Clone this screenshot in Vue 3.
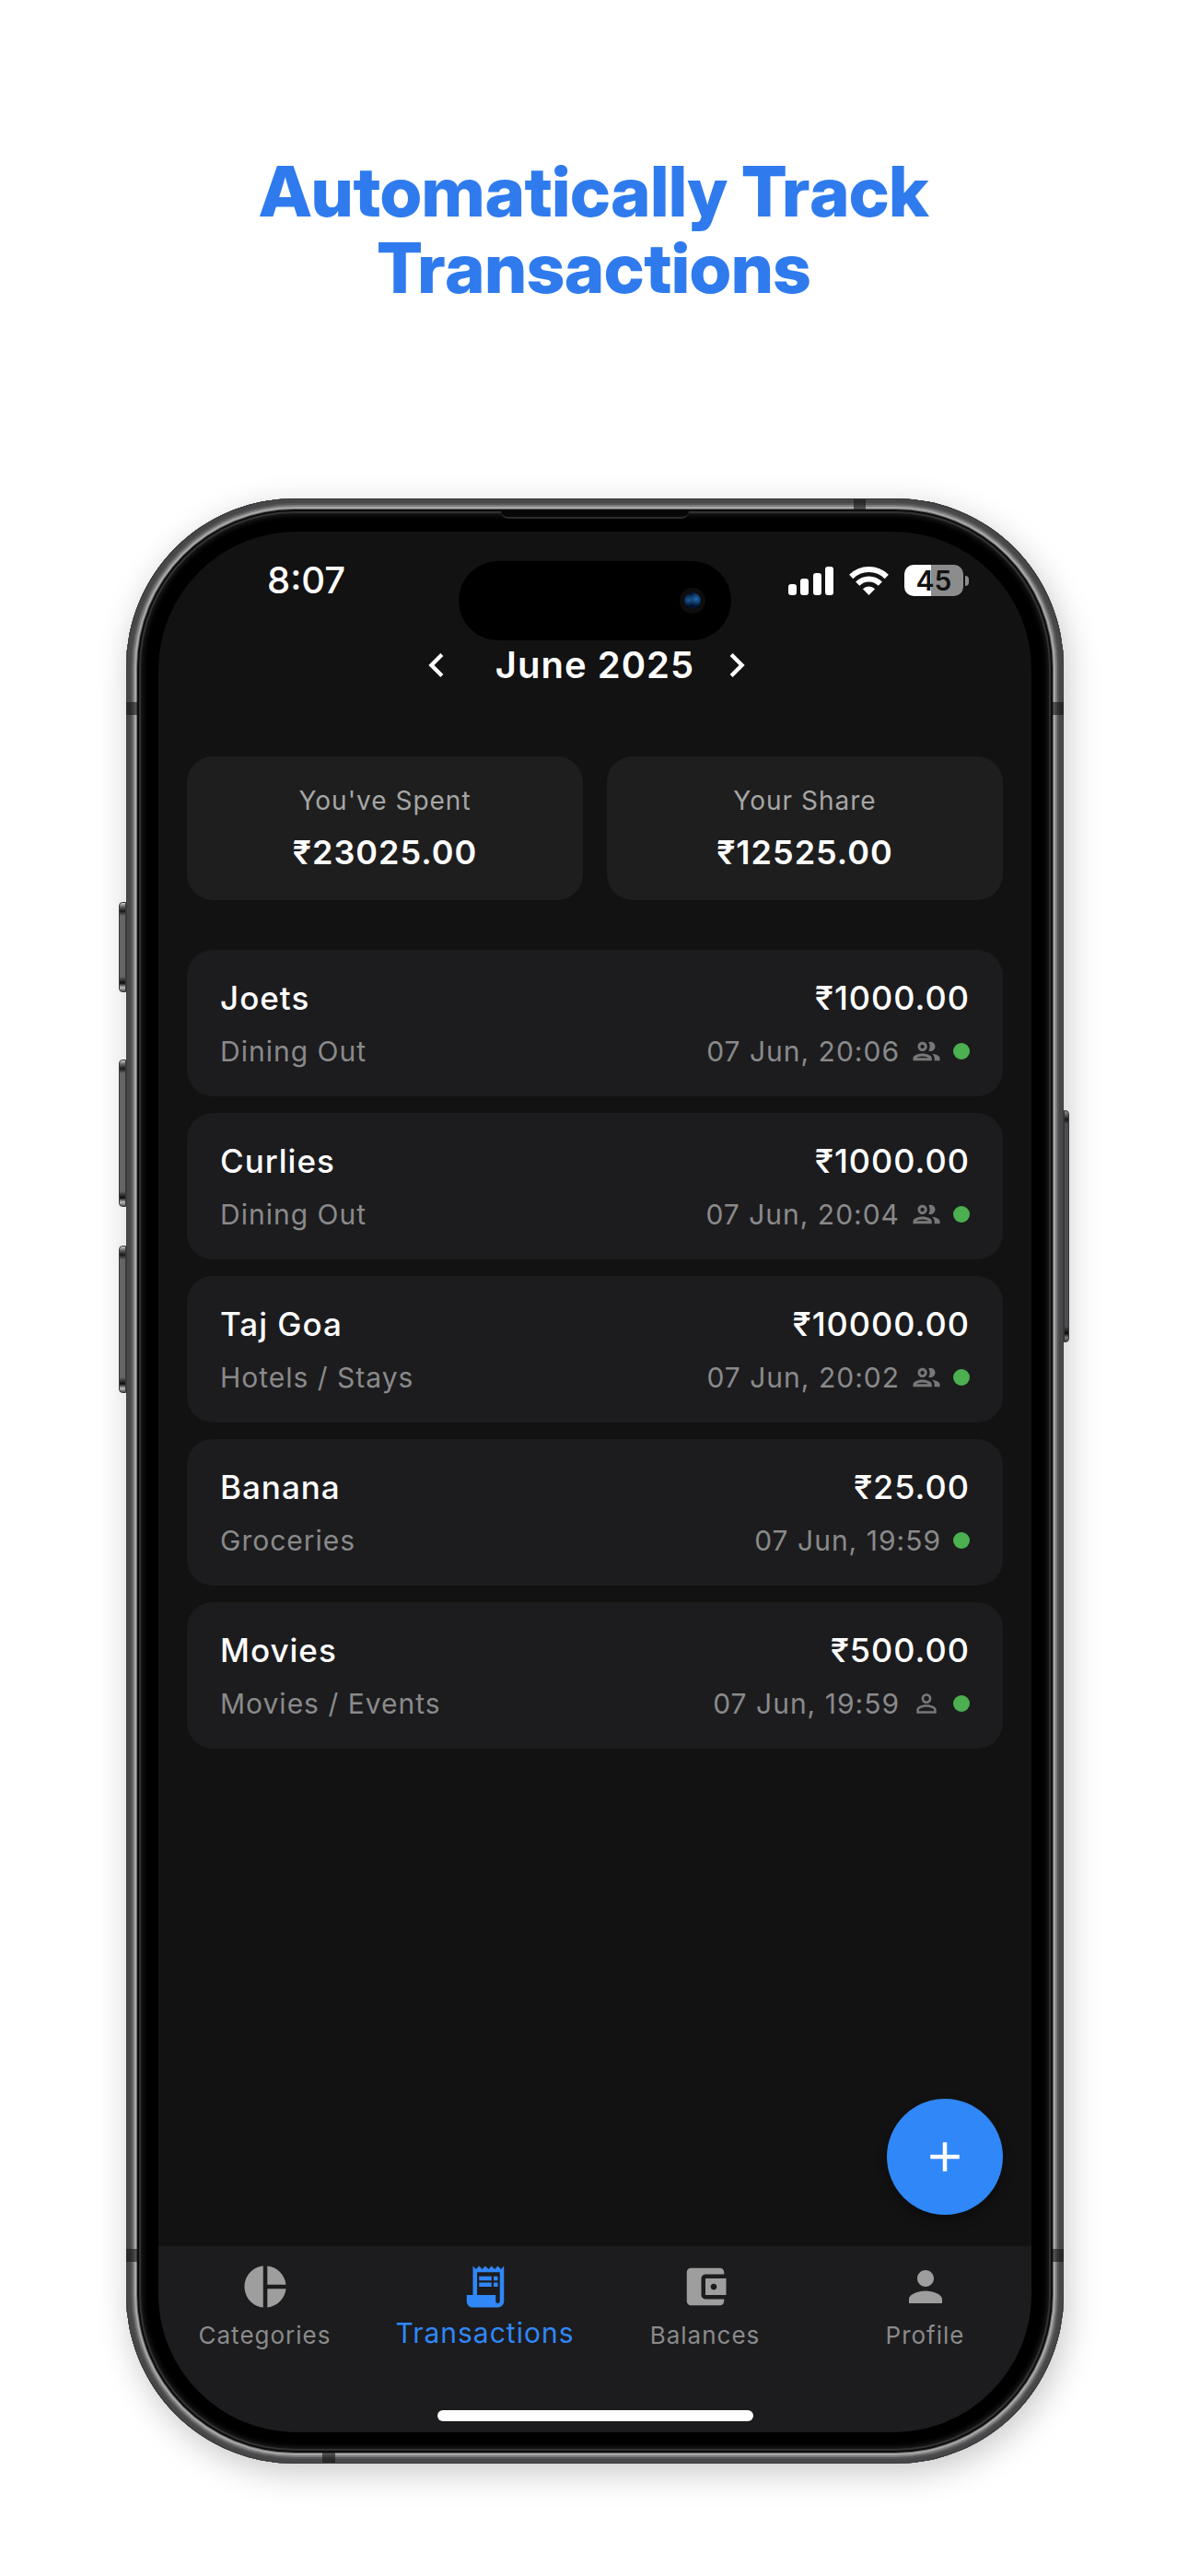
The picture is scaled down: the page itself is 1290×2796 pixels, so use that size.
<script setup>
import { ref } from "vue";

const month = ref("June 2025");
const activeTab = ref("Transactions");

const summary = [
  { label: "You've Spent", amount: "₹23025.00" },
  { label: "Your Share", amount: "₹12525.00" },
];

const transactions = [
  { id: 1, name: "Joets", category: "Dining Out", amount: "₹1000.00", date: "07 Jun, 20:06", split: "group" },
  { id: 2, name: "Curlies", category: "Dining Out", amount: "₹1000.00", date: "07 Jun, 20:04", split: "group" },
  { id: 3, name: "Taj Goa", category: "Hotels / Stays", amount: "₹10000.00", date: "07 Jun, 20:02", split: "group" },
  { id: 4, name: "Banana", category: "Groceries", amount: "₹25.00", date: "07 Jun, 19:59", split: null },
  { id: 5, name: "Movies", category: "Movies / Events", amount: "₹500.00", date: "07 Jun, 19:59", split: "person" },
];

const splitIcons = {
  group: {
    viewBox: "1 1 22 22",
    path: "M9 13.75c-2.34 0-7 1.17-7 3.5V19h14v-1.75c0-2.33-4.66-3.5-7-3.5zM4.34 17c.84-.58 2.87-1.25 4.66-1.25s3.82.67 4.66 1.25H4.34zM9 12c1.93 0 3.5-1.57 3.5-3.5S10.93 5 9 5 5.5 6.57 5.5 8.5 7.07 12 9 12zm0-5c.83 0 1.5.67 1.5 1.5S9.83 10 9 10s-1.5-.67-1.5-1.5S8.17 7 9 7zm7.04 6.81c1.16.84 1.96 1.96 1.96 3.44V19h4v-1.75c0-2.02-3.5-3.17-5.96-3.44zM15 12c1.93 0 3.5-1.57 3.5-3.5S16.93 5 15 5c-.54 0-1.04.13-1.5.35.63.89 1 1.98 1 3.15s-.37 2.26-1 3.15c.46.22.96.35 1.5.35z",
  },
  person: {
    viewBox: "0 0 24 24",
    path: "M12 5.9c1.16 0 2.1.94 2.1 2.1s-.94 2.1-2.1 2.1S9.9 9.16 9.9 8s.94-2.1 2.1-2.1m0 9c2.97 0 6.1 1.46 6.1 2.1v1.1H5.9V17c0-.64 3.13-2.1 6.1-2.1M12 4C9.79 4 8 5.79 8 8s1.79 4 4 4 4-1.79 4-4-1.79-4-4-4zm0 9c-2.67 0-8 1.34-8 4v3h16v-3c0-2.66-5.33-4-8-4z",
  },
};

const tabs = [
  {
    name: "Categories",
    path: "M11 2v20c-5.07-.5-9-4.79-9-10s3.93-9.5 9-10zm2.03 0v8.99H22c-.47-4.74-4.24-8.52-8.97-8.99zm0 11.01V22c4.74-.47 8.5-4.25 8.97-8.99h-8.97z",
  },
  {
    name: "Transactions",
    path: "M19.5 3.5L18 2l-1.5 1.5L15 2l-1.5 1.5L12 2l-1.5 1.5L9 2 7.5 3.5 6 2v14H3v3c0 1.66 1.34 3 3 3h12c1.66 0 3-1.34 3-3V2l-1.5 1.5zM19 19c0 .55-.45 1-1 1s-1-.45-1-1v-3H8V5h11v14zM9 7h6v2H9zM16 7h2v2h-2zM9 10h6v2H9zM16 10h2v2h-2z",
  },
  {
    name: "Balances",
    path: "M21 18v1c0 1.1-.9 2-2 2H5c-1.11 0-2-.9-2-2V5c0-1.1.89-2 2-2h14c1.1 0 2 .9 2 2v1h-9c-1.11 0-2 .9-2 2v8c0 1.1.89 2 2 2h9zm-9-2h10V8H12v8zm4-2.5c-.83 0-1.5-.67-1.5-1.5s.67-1.5 1.5-1.5 1.5.67 1.5 1.5-.67 1.5-1.5 1.5z",
  },
  {
    name: "Profile",
    path: "M12 12c2.21 0 4-1.79 4-4s-1.79-4-4-4-4 1.79-4 4 1.79 4 4 4zm0 2c-2.67 0-8 1.34-8 4v2h16v-2c0-2.66-5.33-4-8-4z",
  },
];
</script>

<template>
  <div class="page">
    <h1 class="headline">Automatically Track<br />Transactions</h1>

    <div class="device">
      <div class="rail rail-left">
        <span class="key key-action"></span>
        <span class="key key-volume"></span>
        <span class="key key-volume"></span>
      </div>

      <div class="frame">
        <span class="antenna antenna-top"></span>
        <span class="antenna antenna-bottom"></span>
        <span class="antenna antenna-upper"></span>
        <span class="antenna antenna-lower"></span>
        <span class="speaker"></span>

        <div class="screen">
          <div class="island"><span class="camera"></span></div>

          <div class="status-bar">
            <span class="time">8:07</span>
            <div class="status-icons">
              <svg class="signal" viewBox="0 0 49 32">
                <rect x="0" y="20" width="9" height="12" rx="3" />
                <rect x="13" y="14" width="9" height="18" rx="3" />
                <rect x="27" y="8" width="9" height="24" rx="3" />
                <rect x="40" y="1" width="9" height="31" rx="3" />
              </svg>
              <svg class="wifi" viewBox="0 0 43 32">
                <path d="M2.2 12a27.5 27.5 0 0 1 38.6 0" />
                <path d="M9.2 19.6a17.3 17.3 0 0 1 24.6 0" />
                <path class="wifi-dot" d="M21.5 32l-6.6-6.8a9.6 9.6 0 0 1 13.2 0z" />
              </svg>
              <div class="battery">
                <span class="battery-body">45</span>
                <span class="battery-tip"></span>
              </div>
            </div>
          </div>

          <header class="month-bar">
            <button class="month-btn" aria-label="Previous month">
              <svg viewBox="0 0 24 24"><path d="M15.41 7.41L14 6l-6 6 6 6 1.41-1.41L10.83 12z" /></svg>
            </button>
            <h2 class="month">{{ month }}</h2>
            <button class="month-btn" aria-label="Next month">
              <svg viewBox="0 0 24 24"><path d="M10 6L8.59 7.41 13.17 12l-4.58 4.59L10 18l6-6z" /></svg>
            </button>
          </header>

          <main class="content">
            <section class="summary">
              <div v-for="item in summary" :key="item.label" class="summary-card">
                <span class="summary-label">{{ item.label }}</span>
                <strong class="summary-amount">{{ item.amount }}</strong>
              </div>
            </section>

            <ul class="list">
              <li v-for="tx in transactions" :key="tx.id" class="tx">
                <div class="tx-row tx-main">
                  <span>{{ tx.name }}</span>
                  <span class="tx-amount">{{ tx.amount }}</span>
                </div>
                <div class="tx-row tx-sub">
                  <span>{{ tx.category }}</span>
                  <span class="tx-meta">
                    <span>{{ tx.date }}</span>
                    <svg v-if="tx.split" class="tx-icon" :viewBox="splitIcons[tx.split].viewBox">
                      <path :d="splitIcons[tx.split].path" />
                    </svg>
                    <span class="dot"></span>
                  </span>
                </div>
              </li>
            </ul>

            <button class="fab" aria-label="Add transaction">
              <svg viewBox="0 0 24 24"><path d="M19 13h-6v6h-2v-6H5v-2h6V5h2v6h6v2z" /></svg>
            </button>
          </main>

          <footer class="bottom">
            <nav class="tabs">
              <a
                v-for="tab in tabs"
                :key="tab.name"
                href="#"
                class="tab"
                :class="{ active: tab.name === activeTab }"
                @click.prevent="activeTab = tab.name"
              >
                <svg viewBox="0 0 24 24"><path :d="tab.path" /></svg>
                <span>{{ tab.name }}</span>
              </a>
            </nav>
            <div class="home-indicator"></div>
          </footer>
        </div>
      </div>

      <div class="rail rail-right">
        <span class="key key-power"></span>
      </div>
    </div>
  </div>
</template>

<style>
body {
  margin: 0;
  background: #ffffff;
}
</style>

<style scoped>
.page {
  display: flex;
  flex-direction: column;
  align-items: center;
  padding: 166px 0 120px;
  font-family: Inter, "Liberation Sans", sans-serif;
  background: #ffffff;
}

.page * {
  box-sizing: border-box;
}

.headline {
  margin: 0 0 209px;
  font-family: "Inter Display", Inter, "Liberation Sans", sans-serif;
  font-size: 76px;
  line-height: 83px;
  font-weight: 800;
  text-align: center;
  color: #2f7bee;
}

.device {
  display: flex;
  width: 80%;
}

/* side keys */
.rail {
  display: flex;
  flex-direction: column;
  flex: none;
}

.rail-left {
  width: 8px;
  padding-top: 438px;
}

.rail-right {
  width: 6px;
  padding-top: 664px;
}

.key {
  border: 1px solid #3c3d3e;
  background: linear-gradient(#e0e0e0 0, #6c6d6e 4px, #1a1a1a 9px, #6c6e6e 14px, #6c6e6e calc(100% - 16px), #0c0c0c calc(100% - 9px), #c8c8c8 calc(100% - 4px), #555555 100%);
}

.rail-left .key {
  border-radius: 4px 0 0 4px;
}

.rail-right .key {
  border-radius: 0 4px 4px 0;
  background: linear-gradient(#9a9a9a 0, #6c6d6e 4px, #1a1a1a 9px, #57575a 14px, #57575a calc(100% - 16px), #0c0c0c calc(100% - 9px), #8a8a8a calc(100% - 4px), #444444 100%);
}

.key-action {
  height: 98px;
  margin-bottom: 73px;
}

.key-volume {
  height: 160px;
  margin-bottom: 42px;
}

.key-power {
  height: 252px;
}

.frame {
  position: relative;
  flex: 1;
  display: flex;
  aspect-ratio: 1018 / 2133;
  padding: 36px 35px 34px;
  border-radius: 183px;
  background: #000000;
  box-shadow:
    inset 0 0 0 1px #3a3a3b,
    inset 0 0 0 5px #48484a,
    inset 0 0 0 7px #58585a,
    inset 0 0 0 9px #7c7c7c,
    inset 0 0 0 11px #a8a8a8,
    inset 0 0 0 12px #6a6a6a,
    inset 0 0 0 14px #0c0c0c,
    inset 0 0 0 16px #303131,
    inset 0 0 6px 17px #242525,
    4px 10px 36px rgba(0, 0, 0, 0.22);
}

.antenna {
  position: absolute;
  background: rgba(20, 20, 20, 0.6);
}

.antenna-top {
  top: 1px;
  right: 215px;
  width: 13px;
  height: 11px;
}

.antenna-bottom {
  bottom: 1px;
  left: 213px;
  width: 14px;
  height: 11px;
}

.antenna-upper,
.antenna-lower {
  left: 0;
  right: 0;
  height: 14px;
  background: linear-gradient(90deg, rgba(20, 20, 20, 0.6) 12px, transparent 12px, transparent calc(100% - 12px), rgba(20, 20, 20, 0.6) calc(100% - 12px));
}

.antenna-upper {
  top: 221px;
}

.antenna-lower {
  bottom: 219px;
}

.speaker {
  position: absolute;
  top: 13px;
  left: 50%;
  width: 204px;
  height: 9px;
  margin-left: -102px;
  border-bottom: 2px solid #2a2b2b;
  border-radius: 0 0 8px 8px;
  background: #070707;
}

.screen {
  position: relative;
  flex: 1;
  display: flex;
  flex-direction: column;
  overflow: hidden;
  border-radius: 150px;
  color: #ffffff;
  background: #121212;
}

.island {
  position: absolute;
  top: 32px;
  left: 50%;
  display: flex;
  align-items: center;
  justify-content: flex-end;
  width: 296px;
  height: 86px;
  margin-left: -148px;
  padding-right: 28px;
  border-radius: 43px;
  background: #000000;
}

.camera {
  width: 28px;
  height: 28px;
  border: 5px solid #0d0d0e;
  border-radius: 50%;
  background:
    radial-gradient(circle at 25% 45%, #1d5c96 0, transparent 40%),
    radial-gradient(circle at 72% 40%, #1f6db0 0, transparent 48%),
    #04122c;
}

.status-bar {
  display: flex;
  align-items: center;
  justify-content: space-between;
  height: 106px;
  padding: 0 68px 0 118px;
}

.time {
  font-size: 40px;
  line-height: 46px;
  font-weight: 500;
}

.status-icons {
  display: flex;
  align-items: center;
  gap: 17px;
}

.status-icons svg {
  height: 32px;
  fill: #ffffff;
}

.signal {
  width: 49px;
}

.wifi {
  width: 43px;
}

.wifi path {
  fill: none;
  stroke: #ffffff;
  stroke-width: 6;
}

.wifi .wifi-dot {
  fill: #ffffff;
  stroke: none;
}

.battery {
  display: flex;
  align-items: center;
  gap: 2px;
}

.battery-body {
  width: 64px;
  height: 34px;
  border-radius: 10px;
  font-size: 30px;
  line-height: 34px;
  font-weight: 600;
  text-align: center;
  color: #121212;
  background: linear-gradient(90deg, #ffffff 45%, #8c8c8c 45%);
}

.battery-tip {
  width: 4px;
  height: 11px;
  border-radius: 0 6px 6px 0;
  background: #8c8c8c;
}

.month-bar {
  display: flex;
  align-items: center;
  justify-content: center;
  height: 78px;
  padding-right: 18px;
}

.month {
  margin: 0 20px 0 38px;
  font-size: 40px;
  line-height: 46px;
  font-weight: 600;
  letter-spacing: 1px;
}

.month-btn {
  display: flex;
  padding: 0;
  border: none;
  background: none;
  cursor: pointer;
}

.month-btn svg {
  width: 52px;
  height: 52px;
  fill: #ffffff;
}

.content {
  flex: 1;
  display: flex;
  flex-direction: column;
  padding: 60px 31px 34px;
}

.summary {
  display: grid;
  grid-template-columns: 1fr 1fr;
  gap: 26px;
}

.summary-card {
  display: flex;
  flex-direction: column;
  align-items: center;
  gap: 17px;
  padding: 30px 30px 31px;
  border-radius: 28px;
  background: #1e1e1e;
}

.summary-label {
  font-size: 28px;
  line-height: 36px;
  letter-spacing: 1px;
  color: #a6a6a6;
}

.summary-amount {
  font-size: 36px;
  line-height: 42px;
  font-weight: 600;
  letter-spacing: 1px;
}

.list {
  display: flex;
  flex-direction: column;
  gap: 18px;
  margin: 54px 0 0;
  padding: 0;
  list-style: none;
}

.tx {
  display: flex;
  flex-direction: column;
  gap: 18px;
  padding: 31px 36px 30px;
  border-radius: 28px;
  background: #1c1c1e;
}

.tx-row {
  display: flex;
  align-items: center;
  justify-content: space-between;
  letter-spacing: 1px;
}

.tx-main {
  font-size: 35px;
  line-height: 42px;
  font-weight: 500;
}

.tx-amount {
  font-size: 36px;
}

.tx-sub {
  font-size: 30px;
  line-height: 38px;
  color: #8a8a8b;
}

.tx-meta {
  display: flex;
  align-items: center;
  gap: 13px;
}

.tx-icon {
  width: 32px;
  height: 32px;
  fill: #777778;
}

.dot {
  width: 18px;
  height: 18px;
  border-radius: 50%;
  background: #4caf50;
}

.fab {
  display: flex;
  align-items: center;
  justify-content: center;
  width: 126px;
  height: 126px;
  margin-top: auto;
  margin-left: auto;
  padding: 0;
  border: none;
  border-radius: 50%;
  background: #3087f7;
  box-shadow: 0 6px 12px rgba(0, 0, 0, 0.35);
  cursor: pointer;
}

.fab svg {
  width: 54px;
  height: 54px;
  fill: #ffffff;
}

.bottom {
  display: flex;
  flex-direction: column;
  justify-content: space-between;
  height: 202px;
  padding: 17px 0 12px;
  background: #1c1c1e;
}

.tabs {
  display: grid;
  grid-template-columns: repeat(4, 1fr);
  margin: 0 -4px;
}

.tab {
  display: flex;
  flex-direction: column;
  align-items: center;
  gap: 7px;
  font-size: 26px;
  line-height: 38px;
  letter-spacing: 1px;
  text-decoration: none;
  color: #8a8a8b;
}

.tab svg {
  width: 54px;
  height: 54px;
  fill: #9e9e9e;
}

.tab.active {
  gap: 4px;
  font-size: 30px;
  color: #3087f7;
}

.tab.active svg {
  fill: #3087f7;
}

.home-indicator {
  width: 343px;
  height: 12px;
  margin: 0 auto;
  border-radius: 6px;
  background: #ffffff;
}
</style>
